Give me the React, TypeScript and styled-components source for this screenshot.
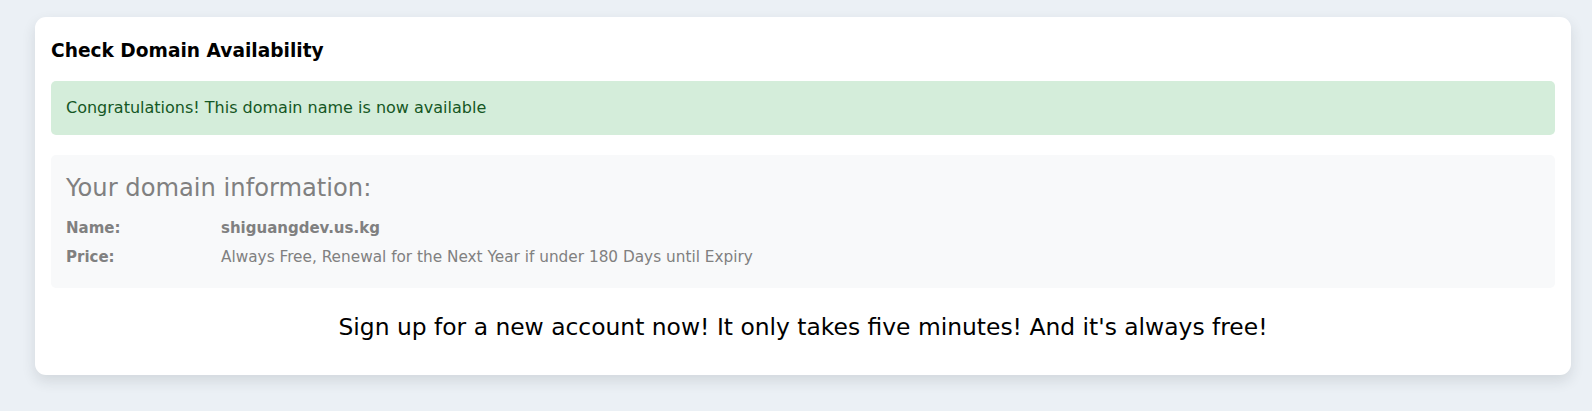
import { createGlobalStyle } from "styled-components";
import styled from "styled-components";


const GlobalStyle = createGlobalStyle`
    html, body {
        margin: 0;
        padding: 0;
        background: #ebf0f5;
        font-family: "DejaVu Sans", "Open Sans", sans-serif;
    }
`;


interface InfoRow {
    label: string;
    value: string;
    strong?: boolean;
}


const rows: InfoRow[] = [
    { label: "Name:", value: "shiguangdev.us.kg", strong: true },
    { label: "Price:", value: "Always Free, Renewal for the Next Year if under 180 Days until Expiry" },
];


export default function App() {
    // render
    return (
        <Page>
            <GlobalStyle />
            <Card>
                <Title>{'Check Domain Availability'}</Title>
                <Alert>{'Congratulations! This domain name is now available'}</Alert>
                <InfoBox>
                    <InfoHeading>{'Your domain information:'}</InfoHeading>
                    <InfoList>
                        {rows.map((row) => (
                            <InfoItem key={row.label}>
                                <InfoLabel>{row.label}</InfoLabel>
                                <InfoValue $strong={row.strong}>{row.value}</InfoValue>
                            </InfoItem>
                        ))}
                    </InfoList>
                </InfoBox>
                <SignUp>{"Sign up for a new account now! It only takes five minutes! And it's always free!"}</SignUp>
            </Card>
        </Page>
    );
}


const Page = styled.div`
    padding: 17px 21px 36px 35px;
`;

const Card = styled.div`
    width: 1536px;
    box-sizing: border-box;
    padding: 22px 16px 32px;
    background: #ffffff;
    border-radius: 11px;
    box-shadow: 0 6px 14px rgba(33, 40, 50, 0.12);
`;

const Title = styled.h5`
    margin: 0 0 18px;
    font-size: 18.6px;
    line-height: 24px;
    font-weight: 700;
    color: #000000;
`;

const Alert = styled.div`
    padding: 16px 15px;
    border-radius: 5px;
    background: #d4edda;
    color: #155724;
    font-size: 16px;
    line-height: 22px;
`;

const InfoBox = styled.div`
    margin-top: 20px;
    padding: 17px 15px 19px;
    border-radius: 5px;
    background: #f8f9fa;
    color: #808080;
`;

const InfoHeading = styled.h4`
    margin: 0 0 12px;
    font-size: 24.2px;
    line-height: 32px;
    font-weight: 400;
`;

const InfoList = styled.div`
    display: flex;
    flex-direction: column;
    gap: 5px;
`;

const InfoItem = styled.div`
    display: grid;
    grid-template-columns: 155px 1fr;
    font-size: 15px;
    line-height: 24px;
`;

const InfoLabel = styled.span`
    font-weight: 700;
`;

const InfoValue = styled.span<{ $strong?: boolean }>`
    font-weight: ${({ $strong }) => ($strong ? 700 : 400)};
    font-size: ${({ $strong }) => ($strong ? "15px" : "15.3px")};
`;

const SignUp = styled.p`
    margin: 23px 0 0;
    text-align: center;
    font-size: 23.4px;
    line-height: 32px;
    color: #000000;
`;
